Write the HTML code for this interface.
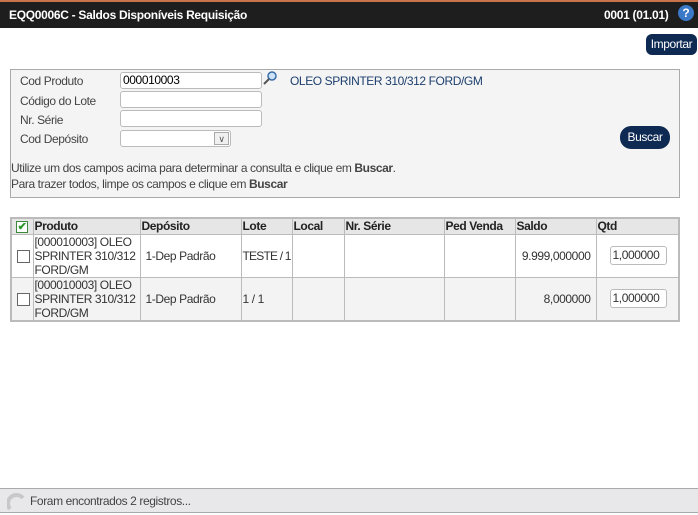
<!DOCTYPE html>
<html><head><meta charset="utf-8"><style>
*{margin:0;padding:0;box-sizing:border-box}
body{width:698px;height:515px;background:#fff;font-family:"Liberation Sans",sans-serif;font-size:12px;letter-spacing:-0.4px;color:#333;position:relative;overflow:hidden}
.hdr{position:absolute;left:0;top:0;width:698px;height:28px;background:#1e1e1e;border-top:2px solid #c8734a;color:#fff;font-weight:bold;font-size:12px;letter-spacing:-0.3px}
.hdr .t{position:absolute;left:9px;top:6px}
.hdr .r{position:absolute;left:604px;top:6px}
.help{position:absolute;left:678px;top:3px;width:16px;height:16px;border-radius:50%;background:#3a78c8;color:#fff;font-size:12px;text-align:center;line-height:16px;letter-spacing:0}
.btn{position:absolute;background:#0f2a52;color:#fff;border-radius:6px;text-align:center;font-size:12px}
.box{position:absolute;left:10px;top:69px;width:670px;height:129px;background:#f4f4f4;border:1px solid #aaa}
.lbl{position:absolute;left:9px;color:#444}
.inp{position:absolute;left:109px;width:142px;height:17px;background:#fff;border:1px solid #bbb;border-radius:3px;padding-left:2px;line-height:15px;color:#000}
table{position:absolute;left:10px;top:217px;width:670px;border-collapse:collapse;border:2px solid #bbb;table-layout:fixed}
td,th{border:1px solid #bbb;text-align:left;font-size:12px;vertical-align:middle;padding:0 1px;white-space:nowrap;overflow:hidden}
th{background:#e6e6e6;height:16px;font-weight:bold;color:#222}
tr.a td{background:#fff;height:42px}
tr.b td{background:#f3f3f3;height:42px}
.cb{display:inline-block;width:13px;height:13px;border:1px solid #666;background:#fff;vertical-align:middle;margin-left:4px}
.q{display:inline-block;width:57px;height:19px;border:1px solid #bbb;border-radius:3px;background:#fff;padding-left:2px;line-height:17px;margin-left:12px}
.foot{position:absolute;left:0;top:488px;width:698px;height:25px;background:#e8e8ea;border-top:1px solid #aaa;border-bottom:1px solid #aaa}
</style></head><body>
<div class="hdr"><span class="t">EQQ0006C - Saldos Disponíveis Requisição</span><span class="r">0001 (01.01)</span><div class="help">?</div></div>
<div class="btn" style="left:646px;top:34px;width:51px;height:21px;line-height:21px">Importar</div>
<div class="box">
<div class="lbl" style="top:4px">Cod Produto</div>
<div class="inp" style="top:2px">000010003</div>
<svg style="position:absolute;left:252px;top:1px" width="14" height="14"><circle cx="9" cy="5" r="4" fill="#cfe3f7" stroke="#3a6ea8" stroke-width="1.5"/><line x1="6" y1="8" x2="1" y2="13" stroke="#555" stroke-width="2"/></svg>
<div style="position:absolute;left:279px;top:4px;color:#1d3f6e">OLEO SPRINTER 310/312 FORD/GM</div>
<div class="lbl" style="top:24px">Código do Lote</div>
<div class="inp" style="top:21px"></div>
<div class="lbl" style="top:43px">Nr. Série</div>
<div class="inp" style="top:40px"></div>
<div class="lbl" style="top:62px">Cod Depósito</div>
<div class="inp" style="top:60px;width:111px"><span style="position:absolute;right:1px;top:1px;width:15px;height:13px;border:1px solid #aaa;background:#f0f0f0;font-size:9px;text-align:center;line-height:12px;color:#555">∨</span></div>
<div class="btn" style="left:609px;top:56px;width:50px;height:23px;line-height:23px;border-radius:11px">Buscar</div>
<div style="position:absolute;left:0;top:90px;color:#444;line-height:16px">Utilize um dos campos acima para determinar a consulta e clique em <b>Buscar</b>.<br>Para trazer todos, limpe os campos e clique em <b>Buscar</b></div>
</div>
<table>
<colgroup><col style="width:22px"><col style="width:107px"><col style="width:101px"><col style="width:51px"><col style="width:52px"><col style="width:100px"><col style="width:71px"><col style="width:81px"><col></colgroup>
<tr><th><span class="cb" style="margin-left:3px;width:12px;height:12px;border-color:#3a8a3a;color:#2a9a2a;font-size:11px;line-height:10px;text-align:center">✔</span></th><th>Produto</th><th>Depósito</th><th>Lote</th><th>Local</th><th>Nr. Série</th><th>Ped Venda</th><th>Saldo</th><th>Qtd</th></tr>
<tr class="a"><td><span class="cb"></span></td><td style="line-height:14px">[000010003] OLEO<br>SPRINTER 310/312<br>FORD/GM</td><td style="padding-left:5px">1-Dep Padrão</td><td style="letter-spacing:-0.8px">TESTE / 1</td><td></td><td></td><td></td><td style="text-align:right;padding-right:5px">9.999,000000</td><td><span class="q">1,000000</span></td></tr>
<tr class="b"><td><span class="cb"></span></td><td style="line-height:14px">[000010003] OLEO<br>SPRINTER 310/312<br>FORD/GM</td><td style="padding-left:5px">1-Dep Padrão</td><td>1 / 1</td><td></td><td></td><td></td><td style="text-align:right;padding-right:5px">8,000000</td><td><span class="q">1,000000</span></td></tr>
</table>
<div class="foot"><svg style="position:absolute;left:7px;top:4px" width="18" height="18"><path d="M3 16 A7 7 0 0 1 16 5" fill="none" stroke="#c8c8c8" stroke-width="4"/></svg><span style="position:absolute;left:30px;top:5px;color:#444">Foram encontrados 2 registros...</span></div>
</body></html>
